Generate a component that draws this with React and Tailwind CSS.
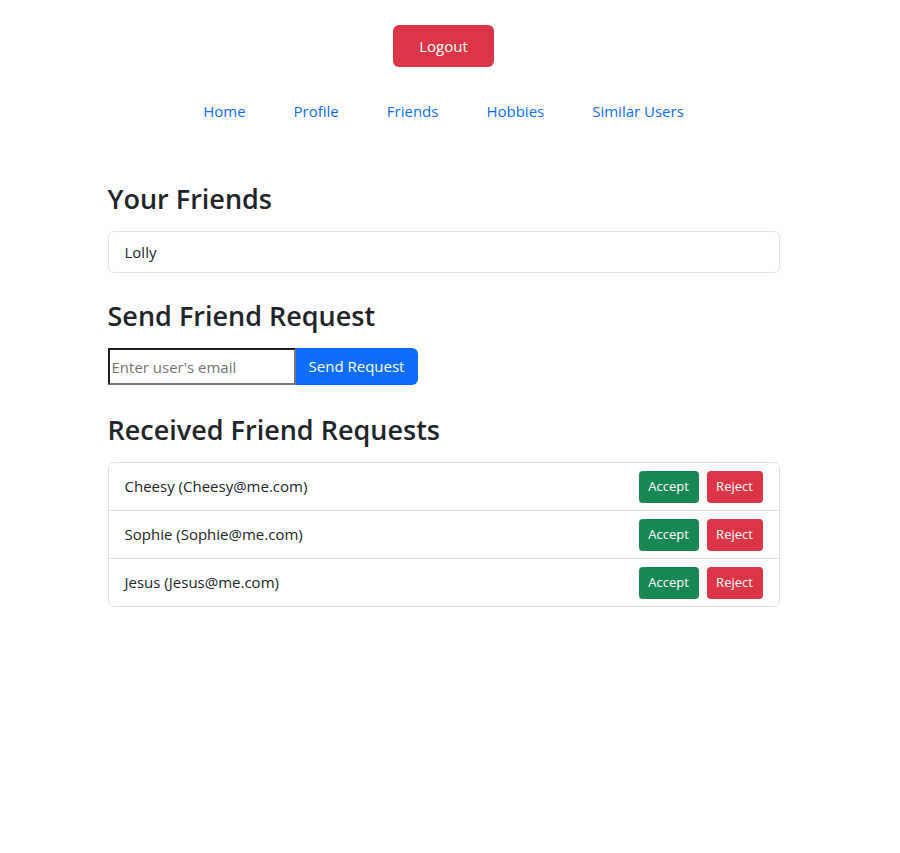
const requests = [
  { name: 'Cheesy', email: 'Cheesy@me.com' },
  { name: 'Sophie', email: 'Sophie@me.com' },
  { name: 'Jesus', email: 'Jesus@me.com' },
]

const links = ['Home', 'Profile', 'Friends', 'Hobbies', 'Similar Users']

export default function App() {
  return (
    <div className="min-h-screen bg-white text-[#212529] font-['Open_Sans',sans-serif] text-[15px]">
      <div className="w-[887px] pt-[25px]">
        <div className="flex justify-center">
          <button className="h-[42px] w-[101px] rounded-md bg-[#dc3545] text-white text-[15px]">
            Logout
          </button>
        </div>
        <nav className="mt-[24px] flex justify-center gap-[48px]">
          {links.map((l) => (
            <a key={l} href="#" className="py-2 leading-6 text-[#0d6efd]">
              {l}
            </a>
          ))}
        </nav>

        <main className="mx-auto mt-[50px] w-[672px]">
          <h2 className="text-[27px] font-semibold leading-9 mb-[14px]">Your Friends</h2>
          <ul className="rounded-md border border-[#dee2e6]">
            <li className="px-4 py-2 leading-6">Lolly</li>
          </ul>

          <h2 className="mt-[25px] text-[27px] font-semibold leading-9 mb-[14px]">Send Friend Request</h2>
          <form className="flex" onSubmit={(e) => e.preventDefault()}>
            <input
              type="email"
              placeholder="Enter user's email"
              className="h-[37px] w-[188px] border-2 border-t-[#1f1f1f] border-l-[#1f1f1f] border-b-[#767676] border-r-[#767676] px-[2px] text-[15px] placeholder:text-[#757575] outline-none"
            />
            <button className="h-[37px] w-[122px] rounded-r-md bg-[#0d6efd] text-white text-[15px]">
              Send Request
            </button>
          </form>

          <h2 className="mt-[27px] text-[27px] font-semibold leading-9 mb-[14px]">Received Friend Requests</h2>
          <ul className="rounded-md border border-[#dee2e6]">
            {requests.map((r, i) => (
              <li
                key={r.email}
                className={`flex items-center justify-between px-4 ${i > 0 ? 'h-[48px] border-t border-[#dee2e6]' : 'h-[47px]'}`}
              >
                <span>
                  {r.name} ({r.email})
                </span>
                <div className="flex gap-2">
                  <button className="h-[32px] w-[60px] rounded bg-[#198754] text-white text-[13px]">Accept</button>
                  <button className="h-[32px] w-[56px] rounded bg-[#dc3545] text-white text-[13px]">Reject</button>
                </div>
              </li>
            ))}
          </ul>
        </main>
      </div>
    </div>
  )
}
